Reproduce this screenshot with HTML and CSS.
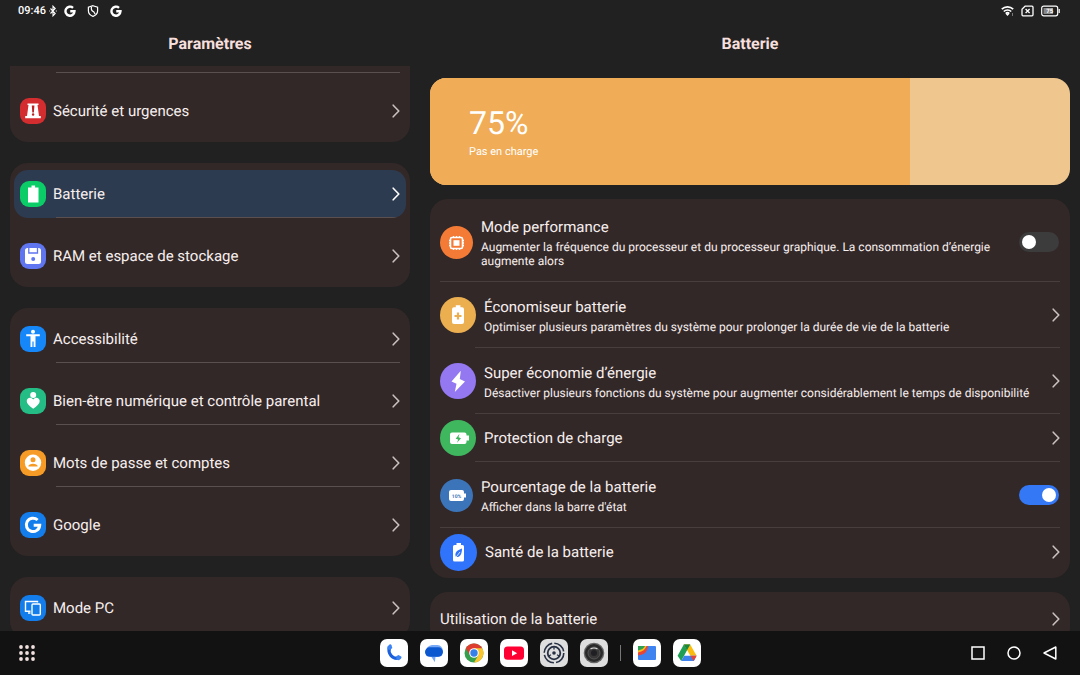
FILE: index.html
```html
<!DOCTYPE html>
<html lang="fr">
<head>
    <meta charset="utf-8">
    <meta name="viewport" content="width=device-width, initial-scale=1">
    <title>Paramètres</title>
    <link rel="stylesheet" href="styles.css">
</head>
<body>
<svg class="defs" aria-hidden="true">
    <symbol id="chevron" viewBox="0 0 8 14"><path d="M1.2 1.200 6.800 7l-5.600 5.800" fill="none" stroke="currentColor" stroke-width="1.600" stroke-linecap="round" stroke-linejoin="round"/></symbol>
    <symbol id="g-logo" viewBox="0 0 24 24"><path d="M18 5.600A9 9 0 1 0 21 12.500h-8.500" fill="none" stroke="currentColor" stroke-width="4.800"/></symbol>
</svg>

<div class="status-bar">
    <div class="status-left">
        <span class="clock">09:46</span>
        <svg class="bluetooth" viewBox="0 0 8 12"><path d="M1.500 3.500 6.200 8.500 4 10.800V1.200l2.200 2.300L1.500 8.500" fill="none" stroke="currentColor" stroke-width="1.100"/><path d="M.2 6h1M6.800 6h1" stroke="currentColor"/></svg>
        <svg class="status-icon" viewBox="0 0 24 24"><use href="#g-logo"/></svg>
        <svg class="status-icon" viewBox="0 0 12 12"><path d="M6 .7 10.600 2.200v3.600c0 2.700-1.900 4.600-4.600 5.600-2.700-1-4.600-2.900-4.600-5.600V2.200z" fill="none" stroke="currentColor" stroke-width="1.200"/><path d="M4.500 1.800c-.7 2.700.5 4.200 2.200 5l1.500 2.500" fill="none" stroke="currentColor" stroke-width="1.200"/></svg>
        <svg class="status-icon" viewBox="0 0 24 24"><use href="#g-logo"/></svg>
    </div>
    <div class="status-right">
        <svg width="13" height="12" viewBox="0 0 13 12"><path d="M.8 4.200a8.200 8.200 0 0 1 11.400 0M2.800 6.500a5.300 5.300 0 0 1 7.400 0M4.700 8.600a2.600 2.600 0 0 1 3.600 0" fill="none" stroke="currentColor" stroke-width="1.700"/><path d="m6.500 11 1.700-2H4.800z" fill="currentColor"/><path d="M11.500 8v3" stroke="#777"/></svg>
        <svg width="13" height="12" viewBox="0 0 13 12"><path d="M4 1.200h7q1 0 1 1v7.600q0 1-1 1H2q-1 0-1-1V4.200z" fill="none" stroke="currentColor" stroke-width="1.300" stroke-linejoin="round"/><path d="m4.600 4 4 4m0-4-4 4" stroke="currentColor" stroke-width="1.300"/></svg>
        <svg width="19" height="12" viewBox="0 0 19 12"><rect x=".7" y="1.200" width="16" height="9.600" rx="2" fill="none" stroke="currentColor" stroke-width="1.200"/><rect x="2.500" y="3" width="9.500" height="6" fill="#888"/><path d="M18.200 4v4" stroke="currentColor" stroke-width="1.200"/><text x="8.700" y="8.200" class="battery-text">75</text></svg>
    </div>
</div>

<main>
    <section class="panel">
        <h1>Paramètres</h1>
        <nav class="scroller">
            <div class="menu menu-cut">
                <div class="cut-item"></div>
                <a class="item" href="#securite">
                    <svg class="app-icon red" viewBox="0 0 26 26"><path d="M7.500 5.500h11V7h-1l1.500 11h1.800v2.300H5.200V18H7L8.500 7h-1z" fill="#fff"/><path d="M11.800 7.500h2.600l-.5 7h-1.600z" fill="#b92323"/><circle cx="13.100" cy="16.500" r="1.200" fill="#b92323"/></svg>
                    <span>Sécurité et urgences</span>
                    <svg class="chevron"><use href="#chevron"/></svg>
                </a>
            </div>

            <div class="menu">
                <a class="item ruled selected" href="#batterie" aria-current="page">
                    <svg class="app-icon green" viewBox="0 0 26 26"><path d="M11.500 4.500h3.600v2h3.400v15H8v-15h3.500z" fill="#fff"/></svg>
                    <span>Batterie</span>
                    <svg class="chevron"><use href="#chevron"/></svg>
                </a>
                <a class="item" href="#stockage">
                    <svg class="app-icon indigo" viewBox="0 0 26 26"><path d="M7.500 5h11q2.500 0 2.500 2.500v11q0 2.500-2.500 2.500h-11Q5 21 5 18.500v-11Q5 5 7.500 5z" fill="#fff"/><path d="M8.800 5v5h8.700V5" fill="none" stroke="#5f76f0" stroke-width="1.300"/><circle cx="13.200" cy="16" r="2" fill="#5f76f0"/></svg>
                    <span>RAM et espace de stockage</span>
                    <svg class="chevron"><use href="#chevron"/></svg>
                </a>
            </div>

            <div class="menu">
                <a class="item ruled" href="#accessibilite">
                    <svg class="app-icon blue" viewBox="0 0 26 26"><circle cx="13" cy="5.800" r="2" fill="#fff"/><path d="M6.200 8.300h13.600v2h-4.300V21h-1.900v-5.500h-1.200V21h-1.900V10.300H6.200z" fill="#fff"/></svg>
                    <span>Accessibilité</span>
                    <svg class="chevron"><use href="#chevron"/></svg>
                </a>
                <a class="item ruled" href="#bien-etre">
                    <svg class="app-icon teal" viewBox="0 0 26 26"><circle cx="13.200" cy="7" r="3" fill="#fff"/><path d="M13.200 20.800c-4-3-6.500-5-6.500-7.800 0-3.400 4.300-4.600 6.500-1.600 2.200-3 6.500-1.800 6.500 1.600 0 2.800-2.500 4.800-6.500 7.800z" fill="#fff"/></svg>
                    <span>Bien-être numérique et contrôle parental</span>
                    <svg class="chevron"><use href="#chevron"/></svg>
                </a>
                <a class="item ruled" href="#comptes">
                    <svg class="app-icon amber" viewBox="0 0 26 26"><circle cx="13" cy="12.800" r="8.200" fill="#fff"/><circle cx="13" cy="9.800" r="2.500" fill="#f79b27"/><path d="M8.300 16.500c0-3.800 9.400-3.800 9.400 0z" fill="#f79b27"/></svg>
                    <span>Mots de passe et comptes</span>
                    <svg class="chevron"><use href="#chevron"/></svg>
                </a>
                <a class="item" href="#google">
                    <svg class="app-icon royal" viewBox="0 0 26 26"><path d="M17.600 8A6.700 6.700 0 1 0 19.700 13.300h-6" fill="none" stroke="#fff" stroke-width="3"/></svg>
                    <span>Google</span>
                    <svg class="chevron"><use href="#chevron"/></svg>
                </a>
            </div>

            <div class="menu">
                <a class="item" href="#mode-pc">
                    <svg class="app-icon royal" viewBox="0 0 26 26" fill="none" stroke="#fff" stroke-width="1.400"><path d="M17.500 7.500V6.500H5.500v9.800h5M8 18h2.500"/><rect x="12" y="9" width="8.300" height="11" rx="1"/></svg>
                    <span>Mode PC</span>
                    <svg class="chevron"><use href="#chevron"/></svg>
                </a>
            </div>
        </nav>
    </section>

    <section class="panel">
        <h2>Batterie</h2>
        <div class="scroller details">
            <div class="charge">
                <div class="charge-level" style="width: 75%">
                    <div class="charge-value">75%</div>
                    <div class="charge-state">Pas en charge</div>
                </div>
            </div>

            <div class="card">
                <label class="row tall rule-full" for="performance">
                    <svg class="round small orange" viewBox="0 0 33 33"><rect x="10.500" y="11.500" width="12" height="11" rx="1.500" fill="none" stroke="#fff" stroke-width="1.600"/><path d="M13.500 10v1.500m3-1.500v1.500m3-1.500v1.500M13.500 22.500V24m3-1.500V24m3-1.500V24M9 14.500h1.500M9 17h1.500M9 19.500h1.500m12-5H24M22.500 17H24m-1.500 2.500H24" stroke="#fff" stroke-width="1.300"/><rect x="13.500" y="14.200" width="6" height="5.600" fill="#fff"/></svg>
                    <span class="text">
                        <span class="title">Mode performance</span>
                        <span class="sub">Augmenter la fréquence du processeur et du processeur graphique. La consommation d’énergie augmente alors</span>
                    </span>
                    <input class="switch" type="checkbox" id="performance">
                </label>
                <a class="row rule-inset" href="#economiseur">
                    <svg class="round yellow" viewBox="0 0 36 36"><path d="M15.800 8.300h4.600v2h1.600q2 0 2 2V25q0 2-2 2h-8q-2 0-2-2V12.300q0-2 2-2h1.800z" fill="#fff"/><path d="M18 15.500v7m-3.500-3.500h7" stroke="#ecaf50" stroke-width="2.200"/></svg>
                    <span class="text">
                        <span class="title">Économiseur batterie</span>
                        <span class="sub">Optimiser plusieurs paramètres du système pour prolonger la durée de vie de la batterie</span>
                    </span>
                    <svg class="chevron"><use href="#chevron"/></svg>
                </a>
                <a class="row rule-inset" href="#super-economie">
                    <svg class="round purple" viewBox="0 0 36 36"><path d="m20.800 7.800-9.300 10.700 5 2.300-1.700 8.200 10.200-10.500-5.200-2.500z" fill="#fff"/></svg>
                    <span class="text">
                        <span class="title">Super économie d’énergie</span>
                        <span class="sub">Désactiver plusieurs fonctions du système pour augmenter considérablement le temps de disponibilité</span>
                    </span>
                    <svg class="chevron"><use href="#chevron"/></svg>
                </a>
                <a class="row short rule-inset" href="#protection">
                    <svg class="round leaf" viewBox="0 0 36 36"><path d="M12 12.500h12.500q2 0 2 2v1h2.500v5h-2.500V22q0 2-2 2H12q-2 0-2-2v-7.500q0-2 2-2z" fill="#fff"/><path d="m19.500 13.800-3.800 5 2.500.7-1.200 3.300 4-4.600-2.500-.9z" fill="#3eb75e"/></svg>
                    <span class="text"><span class="title">Protection de charge</span></span>
                    <svg class="chevron"><use href="#chevron"/></svg>
                </a>
                <label class="row rule-full" for="percentage">
                    <svg class="round small steel" viewBox="0 0 33 33"><path d="M11 11h11q2 0 2 2v1.500h2v4h-2V20q0 2-2 2H11q-2 0-2-2v-7q0-2 2-2z" fill="#fff"/><text x="16.500" y="18.500" class="percent-text">10%</text></svg>
                    <span class="text">
                        <span class="title">Pourcentage de la batterie</span>
                        <span class="sub">Afficher dans la barre d'état</span>
                    </span>
                    <input class="switch" type="checkbox" id="percentage" checked>
                </label>
                <a class="row short" href="#sante">
                    <svg class="round large bright" viewBox="0 0 37 37"><path d="M16.500 9h4.500v2h1.500q1.500 0 1.500 1.500v13.500q0 1.500-1.500 1.500h-8q-1.500 0-1.500-1.500V12.500q0-1.500 1.500-1.500h2z" fill="#fff"/><path d="M22 14.500c-5 1.500-8 4.500-6 8.500 4 .5 6-3 6-8.500z" fill="#2f74fa"/><path d="m15 24.500 5-6.500" stroke="#fff" stroke-width=".8"/></svg>
                    <span class="text"><span class="title">Santé de la batterie</span></span>
                    <svg class="chevron"><use href="#chevron"/></svg>
                </a>
            </div>

            <div class="card">
                <a class="row short" href="#utilisation">
                    <span class="text"><span class="title">Utilisation de la batterie</span></span>
                    <svg class="chevron"><use href="#chevron"/></svg>
                </a>
            </div>
        </div>
    </section>
</main>

<footer class="taskbar">
    <div>
        <button class="plain" aria-label="Toutes les applications">
            <svg width="16" height="16" viewBox="0 0 16 16" fill="#f0e0de"><circle cx="2" cy="2" r="1.900"/><circle cx="8" cy="2" r="1.900"/><circle cx="14" cy="2" r="1.900"/><circle cx="2" cy="8" r="1.900"/><circle cx="8" cy="8" r="1.900"/><circle cx="14" cy="8" r="1.900"/><circle cx="2" cy="14" r="1.900"/><circle cx="8" cy="14" r="1.900"/><circle cx="14" cy="14" r="1.900"/></svg>
        </button>
    </div>
    <div class="dock">
        <button aria-label="Téléphone">
            <svg viewBox="0 0 28 28"><path d="M9.300 9c-1.500 5.500 3 11 8.700 10.200" fill="none" stroke="#1a5fdc" stroke-width="3.200"/><path d="m7.300 7.800 2.200-2.300q1.500-.5 2 .8l.8 2.700-2.200 2-2.700-.8z" fill="#3b82f3"/><path d="m16.200 17.300 2.300-1.200 2.700 1.300q.8 1-.2 2.200l-2 1.600-2.600-.4z" fill="#3b82f3"/></svg>
        </button>
        <button aria-label="Messages">
            <svg viewBox="0 0 28 28"><path d="M12 6h5.500c7 .5 7 10.500 0 12h-2l-.7 5.200-3.300-5.200C4 16.500 4.500 7 12 6z" fill="#78a9f8"/><rect x="5" y="8.300" width="18" height="9.500" rx="4.700" fill="#0b57d0"/></svg>
        </button>
        <button aria-label="Chrome">
            <svg viewBox="0 0 28 28"><circle cx="14" cy="14" r="9.500" fill="#34a04c"/><path d="M5.800 9.200a9.500 9.500 0 0 1 16.400 0L14 14z" fill="#df3c30"/><path d="M14 9.200h8.200A9.500 9.500 0 0 1 14 23.500l4.200-7.100z" fill="#fbc52e"/><path d="m5.800 9.200 4.100 7.100L14 14V9.200z" fill="#df3c30"/><circle cx="14" cy="14" r="4.800" fill="#fff"/><circle cx="14" cy="14" r="3.700" fill="#347fe8"/></svg>
        </button>
        <button aria-label="YouTube">
            <svg viewBox="0 0 28 28"><rect x="4" y="7.500" width="20" height="13.300" rx="3.500" fill="#ff0033"/><path d="m12 11.300 5.200 2.900-5.200 2.900z" fill="#fff"/></svg>
        </button>
        <button class="grey" aria-label="Paramètres">
            <svg viewBox="0 0 28 28" fill="none" stroke="#273043"><circle cx="14" cy="14" r="9.800" stroke-width="1.600" stroke-dasharray="13.200 2.200"/><circle cx="14" cy="14" r="6.300" stroke-width="1.800"/><circle cx="14" cy="14" r="1.800" fill="#273043" stroke="none"/><path d="M14 8v2.500m5.200 6.500-2.200-1.200M8.800 17l2.200-1.200" stroke-width="1.300"/></svg>
        </button>
        <button class="grey" aria-label="Appareil photo">
            <svg viewBox="0 0 28 28"><circle cx="14" cy="14" r="10.300" fill="#666"/><circle cx="14" cy="14" r="9" fill="#292929"/><circle cx="14" cy="14" r="6" fill="#393737" stroke="#555"/><circle cx="14" cy="14" r="3" fill="#202024"/><path d="M10.500 10q3.500-2 7 0" fill="none" stroke="#ddd" stroke-width="1.200"/></svg>
        </button>
        <span class="dock-divider"></span>
        <button aria-label="Fichiers">
            <svg viewBox="0 0 28 28"><rect x="5" y="7" width="18" height="14" rx="1" fill="#3f83f1"/><path d="M5 7h10l-1 4q-1.500 4.500-9 5.500z" fill="#ea4435"/><path d="M5 7h8.500q-1.500 5-8.500 6.500z" fill="#fbbc18"/><path d="M5 7h7q-1.500 3.500-7 4.500z" fill="#2d9f52"/></svg>
        </button>
        <button aria-label="Drive">
            <svg viewBox="0 0 28 28"><path d="M10.800 5.500h6.400L8.200 22 4.600 16.800z" fill="#1e9f54"/><path d="M10.800 5.500h6.400l6.400 11.300h-6.200z" fill="#fbbc10"/><path d="m14 5.500-3.200 0L14 11.200l3.200-5.700z" fill="#178543"/><path d="M11.200 16.800h12.400L20.800 22H8.200z" fill="#3d82ed"/><path d="M17.400 16.800h6.200L20.800 22z" fill="#e94335"/></svg>
        </button>
    </div>
    <div class="system-nav">
        <button class="plain" aria-label="Récents"><svg width="14" height="14" viewBox="0 0 14 14"><rect x="1" y="1" width="12" height="12" fill="none" stroke="#fff" stroke-width="1.500"/></svg></button>
        <button class="plain" aria-label="Accueil"><svg width="14" height="14" viewBox="0 0 14 14"><circle cx="7" cy="7" r="6" fill="none" stroke="#fff" stroke-width="1.500"/></svg></button>
        <button class="plain" aria-label="Retour"><svg width="14" height="14" viewBox="0 0 14 14"><path d="M12.800 1v12L1 7z" fill="none" stroke="#fff" stroke-width="1.500" stroke-linejoin="round"/></svg></button>
    </div>
</footer>
</body>
</html>
```
FILE: styles.css
```css
:root {
    --bg-color: #212121;
    --card-color: #332828;
    --selected-color: #2d3b50;
    --bar-color: #121212;
    --text-color: #f7efee;
    --heading-color: #f6dfdc;
    --chevron-color: #c9c0c0;
    --divider-color: #5b5050;
    --divider-soft-color: #493e3e;
    --charge-color: #f0ac57;
    --charge-rest-color: #efc78e;
    --switch-on: #3478f6;
    --switch-off: #3c3c3c;
}

* {
    box-sizing: border-box;
}

body {
    margin: 0;
    height: 100vh;
    display: flex;
    flex-direction: column;
    overflow: hidden;
    background: var(--bg-color);
    color: var(--text-color);
    font-family: Roboto, "Liberation Sans", sans-serif;
    font-size: 15px;
    line-height: 20px;
    text-rendering: geometricPrecision;
}

svg {
    display: block;
    flex-shrink: 0;
}

.defs {
    display: none;
}

a {
    color: inherit;
    text-decoration: none;
}

/* status bar */
.status-bar {
    display: flex;
    justify-content: space-between;
    align-items: center;
    height: 22px;
    padding: 0 20px 0 18px;
    color: #fff;
}

.status-left {
    display: flex;
    align-items: center;
    gap: 11px;
}

.clock {
    font-size: 11px;
    font-weight: 500;
}

.bluetooth {
    width: 8px;
    height: 12px;
    margin: 0 -4px 0 -8px;
}

.status-icon {
    width: 12px;
    height: 12px;
}

.status-right {
    display: flex;
    align-items: center;
    gap: 7px;
}

.battery-text {
    font-size: 6px;
    font-weight: 700;
    text-anchor: middle;
    fill: #fff;
}

/* two panels */
main {
    flex: 1;
    min-height: 0;
    display: grid;
    grid-template-columns: 5fr 8fr;
    gap: 20px;
    padding: 0 10px;
}

.panel {
    min-width: 0;
    min-height: 0;
    display: flex;
    flex-direction: column;
}

h1,
h2 {
    margin: 0;
    font-size: 16px;
    font-weight: 700;
    line-height: 44px;
    text-align: center;
    color: var(--heading-color);
}

.scroller {
    flex: 1;
    min-height: 0;
    overflow: hidden;
    display: flex;
    flex-direction: column;
    gap: 21px;
}

/* settings menu */
.menu {
    flex-shrink: 0;
    display: flex;
    flex-direction: column;
    gap: 14px;
    padding: 7px 4px;
    border-radius: 18px;
    background: var(--card-color);
}

.menu-cut {
    padding-top: 0;
    border-radius: 0 0 18px 18px;
}

.cut-item {
    height: 7px;
    margin: 0 6px 0 42px;
    border-bottom: 1px solid var(--divider-color);
}

.item {
    display: flex;
    align-items: center;
    gap: 7px;
    height: 48px;
    padding: 0 6px;
}

.item span {
    flex: 1;
}

.ruled {
    background: linear-gradient(var(--divider-color), var(--divider-color)) 42px 100% / calc(100% - 48px) 1px no-repeat;
}

.selected {
    border-radius: 14px;
    background-color: var(--selected-color);
}

.selected .chevron {
    color: #fff;
}

.app-icon {
    width: 26px;
    height: 26px;
    border-radius: 9px;
}

.chevron {
    width: 8px;
    height: 14px;
    color: var(--chevron-color);
}

.red { background: #d32d2f; }
.green { background: #0bcd67; }
.indigo { background: #5f76f0; }
.blue { background: #1687f8; }
.teal { background: #23bd85; }
.amber { background: #f79b27; }
.royal { background: #137deb; }

/* battery details */
.details {
    padding-top: 12px;
    gap: 14px;
}

.charge {
    flex-shrink: 0;
    overflow: hidden;
    border-radius: 16px;
    background: var(--charge-rest-color);
}

.charge-level {
    padding: 27px 39px 26px;
    background: var(--charge-color);
    color: #fff;
}

.charge-value {
    font-size: 32px;
    line-height: 36px;
}

.charge-state {
    margin-top: 4px;
    font-size: 11px;
    line-height: 14px;
}

.card {
    flex-shrink: 0;
    padding: 3px 10px 2px;
    border-radius: 18px;
    background: var(--card-color);
}

.row {
    display: flex;
    align-items: center;
    gap: 8px;
    min-height: 66px;
}

.tall {
    min-height: 80px;
}

.short {
    min-height: 48px;
}

.rule-full {
    background: linear-gradient(var(--divider-soft-color), var(--divider-soft-color)) 0 100% / 100% 1px no-repeat;
}

.rule-inset {
    background: linear-gradient(var(--divider-soft-color), var(--divider-soft-color)) 35px 100% / calc(100% - 35px) 1px no-repeat;
}

.text {
    flex: 1;
    display: flex;
    flex-direction: column;
    gap: 3px;
}

.sub {
    font-size: 12px;
    line-height: 14px;
}

.round {
    width: 36px;
    height: 36px;
    border-radius: 50%;
}

.round.small {
    width: 33px;
    height: 33px;
}

.round.large {
    width: 37px;
    height: 37px;
}

.orange { background: #f47b36; }
.yellow { background: #ecaf50; }
.purple { background: #9378f2; }
.leaf { background: #3eb75e; }
.steel { background: #3b74b8; }
.bright { background: #2f74fa; }

.percent-text {
    font-size: 5px;
    font-weight: 700;
    text-anchor: middle;
    fill: #3b74b8;
}

.switch {
    appearance: none;
    flex-shrink: 0;
    display: flex;
    width: 40px;
    height: 20px;
    margin: 0 1px 0 0;
    padding: 3px;
    border-radius: 10px;
    background: var(--switch-off);
}

.switch::before {
    content: "";
    width: 14px;
    height: 14px;
    border-radius: 50%;
    background: #fff;
}

.switch:checked {
    justify-content: flex-end;
    background: var(--switch-on);
}

/* taskbar */
.taskbar {
    display: grid;
    grid-template-columns: 1fr auto 1fr;
    align-items: center;
    height: 44px;
    padding: 0 19px;
    background: var(--bar-color);
}

.taskbar button {
    display: block;
    padding: 0;
    border: none;
    cursor: pointer;
}

.taskbar .plain {
    background: none;
}

.dock {
    display: flex;
    align-items: center;
    gap: 12px;
}

.dock button {
    width: 28px;
    height: 28px;
    border-radius: 7px;
    background: #fff;
}

.dock .grey {
    background: #dededf;
}

.dock-divider {
    width: 1px;
    height: 16px;
    background: #777;
}

.system-nav {
    display: flex;
    justify-content: flex-end;
    gap: 22px;
    padding-right: 4px;
}
```
